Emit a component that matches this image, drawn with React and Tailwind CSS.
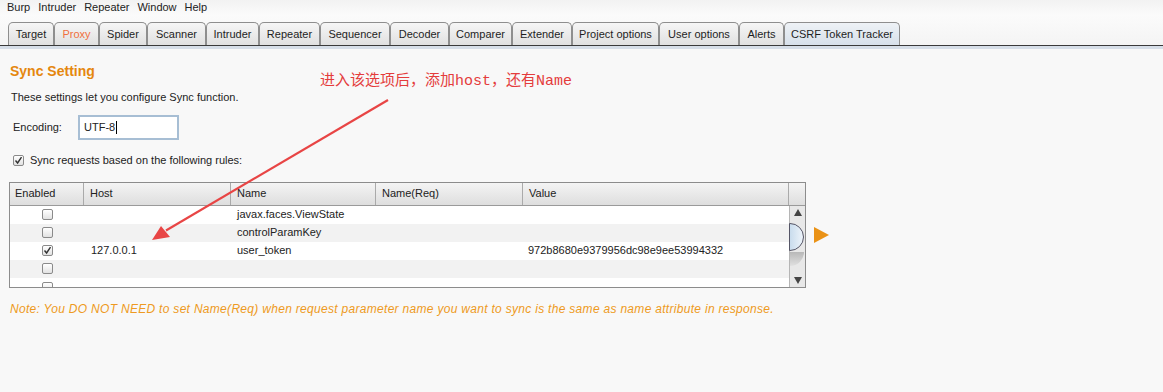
import React from "react";

const tabs = [
  { label: "Target", w: 46 },
  { label: "Proxy", w: 45, color: "text-[#f07040]" },
  { label: "Spider", w: 48 },
  { label: "Scanner", w: 59 },
  { label: "Intruder", w: 53 },
  { label: "Repeater", w: 61 },
  { label: "Sequencer", w: 70 },
  { label: "Decoder", w: 59 },
  { label: "Comparer", w: 63 },
  { label: "Extender", w: 60 },
  { label: "Project options", w: 87 },
  { label: "User options", w: 80 },
  { label: "Alerts", w: 45 },
  { label: "CSRF Token Tracker", w: 116, active: true },
];

const rows = [
  { checked: false, host: "", name: "javax.faces.ViewState", value: "" },
  { checked: false, host: "", name: "controlParamKey", value: "" },
  { checked: true, host: "127.0.0.1", name: "user_token", value: "972b8680e9379956dc98e9ee53994332" },
  { checked: false, host: "", name: "", value: "" },
];

function Check({ checked }) {
  return (
    <span className="w-[11px] h-[11px] rounded-[2px] border border-[#8a8a8a] bg-gradient-to-b from-white to-[#e2e2e2] flex items-center justify-center">
      {checked && (
        <svg width="9" height="9" viewBox="0 0 9 9">
          <path d="M1.5 4.5 L3.6 7 L7.5 1.2" fill="none" stroke="#333" strokeWidth="1.4" />
        </svg>
      )}
    </span>
  );
}

function Cell({ w, children, className = "" }) {
  return <div className={`shrink-0 flex items-center ${className}`} style={{ width: w }}>{children}</div>;
}

export default function App() {
  return (
    <div className="w-[1163px] h-[392px] bg-[#f8f8f8] relative overflow-hidden text-[#222] font-['Liberation_Sans',Arial,sans-serif]">
      {/* menu */}
      <div className="h-[15px] flex items-center gap-[8px] pl-[7px] text-[11px] text-[#222] bg-gradient-to-b from-[#f2f2f2] to-[#fbfbfb]">
        <span>Burp</span>
        <span>Intruder</span>
        <span>Repeater</span>
        <span>Window</span>
        <span>Help</span>
      </div>

      {/* tabs */}
      <div className="h-[31px] flex items-end pl-[8px] bg-gradient-to-b from-[#fbfbfb] to-[#f4f4f4] border-b border-[#3a3a3a]">
        {tabs.map((t) => (
          <div
            key={t.label}
            style={{ width: t.w }}
            className={`h-[23px] shrink-0 flex items-center justify-center text-[11px] border border-b-0 border-[#8e8e8e] rounded-t-[5px] ${
              t.active ? "bg-gradient-to-b from-[#eef2f6] to-[#d7e0ea]" : "bg-gradient-to-b from-[#f6f6f6] to-[#e0e0e0]"
            } ${t.color || "text-[#1e1e1e]"}`}
          >
            {t.label}
          </div>
        ))}
      </div>
      <div className="h-[3px] bg-[#d6dee8]" />

      {/* content */}
      <div className="pl-[10px] pt-[13px]">
        <div className="text-[14px] font-bold text-[#e5870e] leading-[18px]">Sync Setting</div>
        <div className="text-[11px] mt-[10px] ml-[1px] leading-[14px]">These settings let you configure Sync function.</div>
        <div className="flex items-center mt-[11px] ml-[3px]">
          <span className="text-[11px] w-[65px]">Encoding:</span>
          <div className="w-[101px] h-[25px] border-2 border-[#a7bed4] bg-white flex items-center pl-[4px] text-[11px]">
            UTF-8<span className="w-px h-[13px] bg-black ml-[1px]" />
          </div>
        </div>
        <div className="flex items-center gap-[6px] mt-[12px] ml-[3px] text-[11px]">
          <Check checked />
          <span>Sync requests based on the following rules:</span>
        </div>

        <div className="flex items-center mt-[13px] -ml-[1px]">
          <div className="w-[797px] h-[106px] border border-[#8c8c8c] bg-white flex flex-col overflow-hidden text-[11px]">
            <div className="h-[23px] shrink-0 flex bg-gradient-to-b from-[#f4f4f4] to-[#dedede] border-b border-[#9a9a9a]">
              <Cell w={74} className="pl-[5px] border-r border-[#aaa]">Enabled</Cell>
              <Cell w={147} className="pl-[6px] border-r border-[#aaa]">Host</Cell>
              <Cell w={145} className="pl-[6px] border-r border-[#aaa]">Name</Cell>
              <Cell w={147} className="pl-[6px] border-r border-[#aaa]">Name(Req)</Cell>
              <Cell w={266} className="pl-[6px] border-r border-[#aaa]">Value</Cell>
              <Cell w={16} />
            </div>
            <div className="flex flex-1 min-h-0">
              <div className="flex-1 flex flex-col overflow-hidden">
                {rows.map((r, i) => (
                  <div key={i} className={`h-[18px] shrink-0 flex ${i % 2 ? "bg-[#f2f2f2]" : "bg-white"}`}>
                    <Cell w={74} className="justify-center"><Check checked={r.checked} /></Cell>
                    <Cell w={147} className="pl-[7px]">{r.host}</Cell>
                    <Cell w={145} className="pl-[6px]">{r.name}</Cell>
                    <Cell w={147} />
                    <Cell w={266} className="pl-[5px]">{r.value}</Cell>
                  </div>
                ))}
                <div className="h-[18px] shrink-0 flex bg-white">
                  <Cell w={74} className="justify-center items-start pt-[4px]"><Check /></Cell>
                </div>
              </div>
              {/* scrollbar */}
              <div className="w-[16px] shrink-0 border-l border-[#b5b5b5] bg-[#e8e8e8] flex flex-col items-center justify-between py-[3px] relative">
                <svg width="8" height="7" viewBox="0 0 8 7"><path d="M4 0 L8 7 L0 7 Z" fill="#444" /></svg>
                <svg width="8" height="7" viewBox="0 0 8 7"><path d="M0 0 L8 0 L4 7 Z" fill="#444" /></svg>
                <div className="absolute left-[-1px] top-[17px] w-[15px] h-[28px] rounded-r-full border border-[#556] bg-gradient-to-r from-[#c9dced] to-[#eef4fa]" />
                <div className="absolute left-[0px] top-[46px] w-[14px] h-[14px] rounded-br-full bg-gradient-to-b from-[#b8b8b8] to-[#e0e0e0]" />
              </div>
            </div>
          </div>
          <svg width="15" height="16" viewBox="0 0 15 16" className="ml-[8px]">
            <path d="M0 0 L15 8 L0 16 Z" fill="#ea9216" />
          </svg>
        </div>

        <div className="mt-[12px] text-[12px] tracking-[0.3px] italic text-[#ee9a22]">
          Note: You DO NOT NEED to set Name(Req) when request parameter name you want to sync is the same as name attribute in response.
        </div>
      </div>

      {/* annotation */}
      <div className="absolute left-[320px] top-[73px] text-[15px] leading-[18px] text-[#e43c3c] font-['Liberation_Mono','Noto_Sans_CJK_SC',monospace]">
        进入该选项后，添加host，还有Name
      </div>
      <svg className="absolute left-0 top-0 pointer-events-none" width="1163" height="392">
        <path d="M388 100 L166 230.5" stroke="#e84545" strokeWidth="2.2" fill="none" />
        <path d="M152 240 L161 226 L170 237 Z" fill="#e84545" />
      </svg>
    </div>
  );
}
